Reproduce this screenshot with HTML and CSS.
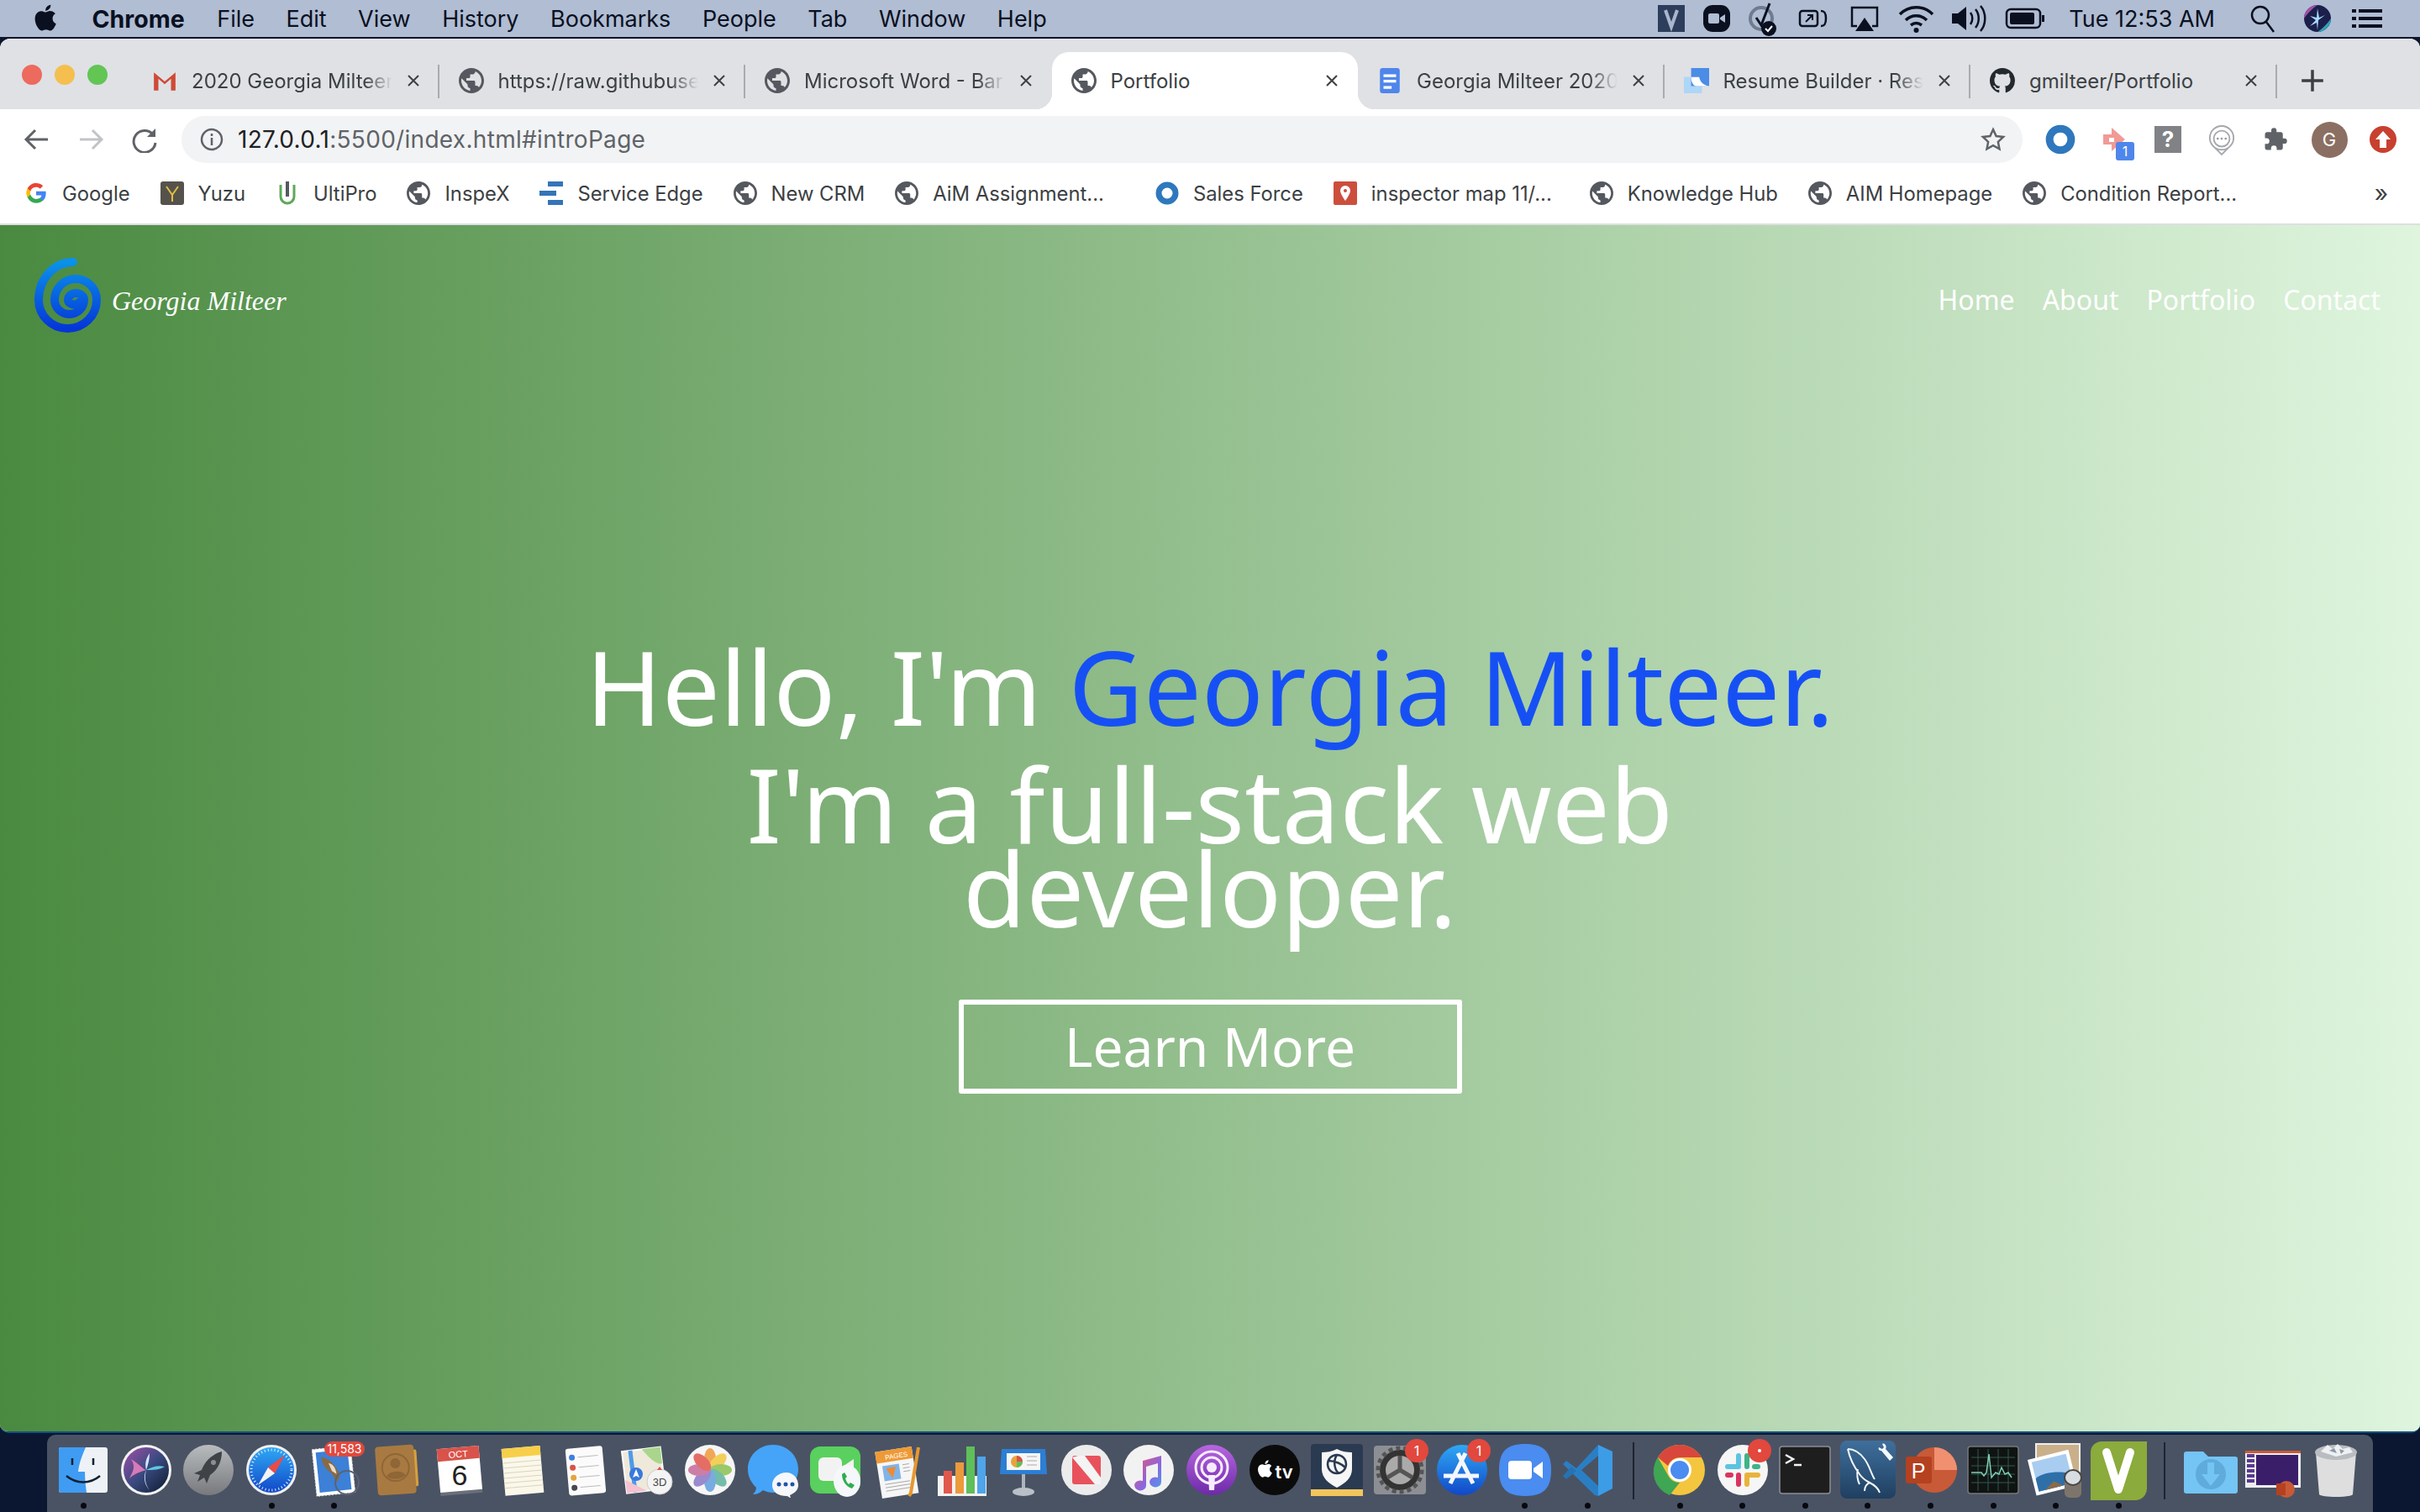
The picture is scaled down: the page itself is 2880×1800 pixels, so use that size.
FILE: index.html
```html
<!DOCTYPE html>
<html lang="en">
  <head>
    <meta charset="UTF-8" />
    <title>Portfolio</title>
    <link rel="stylesheet" href="styles.css">
  </head>
  <body>
    <svg class="svg-defs" aria-hidden="true">
      <defs>
        <linearGradient id="spiral-grad" x1="0" y1="0" x2="0" y2="1"><stop offset="0" stop-color="#0a92ea"/><stop offset="1" stop-color="#0536d8"/></linearGradient>
        <linearGradient id="grey-grad" x1="0" y1="0" x2="0" y2="1"><stop offset="0" stop-color="#b9bcbf"/><stop offset="1" stop-color="#77797c"/></linearGradient>
        <linearGradient id="blue-grad" x1="0" y1="0" x2="0" y2="1"><stop offset="0" stop-color="#2fa8f5"/><stop offset="1" stop-color="#1148c8"/></linearGradient>
        <linearGradient id="siri-grad" x1="0" y1="0" x2="1" y2="1"><stop offset="0" stop-color="#a34fa8"/><stop offset=".5" stop-color="#3a4a80"/><stop offset="1" stop-color="#0c1a2c"/></linearGradient>
        <linearGradient id="purple-grad" x1="0" y1="0" x2="0" y2="1"><stop offset="0" stop-color="#b766e0"/><stop offset="1" stop-color="#6d2aa8"/></linearGradient>
        <linearGradient id="note-grad" x1="0" y1="0" x2="1" y2="1"><stop offset="0" stop-color="#f2546a"/><stop offset=".6" stop-color="#8a66e0"/><stop offset="1" stop-color="#45a0ee"/></linearGradient>
        <linearGradient id="mysql-grad" x1="0" y1="0" x2="0" y2="1"><stop offset="0" stop-color="#3f6f9c"/><stop offset="1" stop-color="#1f3f60"/></linearGradient>
        <symbol id="apple" viewBox="0 0 24 24"><path d="M17.05 12.04c-.03-2.6 2.12-3.85 2.22-3.91-1.21-1.77-3.09-2.01-3.76-2.04-1.6-.16-3.12.94-3.93.94-.81 0-2.06-.92-3.39-.89-1.74.03-3.35 1.01-4.25 2.57-1.81 3.14-.46 7.8 1.3 10.35.86 1.25 1.89 2.65 3.24 2.6 1.3-.05 1.79-.84 3.36-.84 1.57 0 2.01.84 3.39.81 1.4-.02 2.28-1.27 3.14-2.53.99-1.45 1.39-2.85 1.42-2.93-.03-.01-2.72-1.04-2.74-4.13zM14.47 4.4c.72-.87 1.2-2.07 1.07-3.27-1.03.04-2.28.69-3.02 1.55-.66.77-1.24 2-1.09 3.18 1.15.09 2.32-.58 3.04-1.46z"/></symbol>
        <symbol id="globe" viewBox="2 2 20 20"><path fill="#55585e" d="M12 2C6.48 2 2 6.48 2 12s4.48 10 10 10 10-4.48 10-10S17.52 2 12 2zm-1 17.93c-3.95-.49-7-3.85-7-7.93 0-.62.08-1.21.21-1.79L9 15v1c0 1.1.9 2 2 2v1.93zm6.9-2.54c-.26-.81-1-1.39-1.9-1.39h-1v-3c0-.55-.45-1-1-1H8v-2h2c.55 0 1-.45 1-1V7h2c1.1 0 2-.9 2-2v-.41c2.93 1.19 5 4.06 5 7.41 0 2.08-.8 3.97-2.1 5.39z"/></symbol>
        <symbol id="close" viewBox="0 0 16 16"><path d="M2 2l12 12M14 2L2 14" stroke="#3c4043" stroke-width="2" fill="none"/></symbol>
        <symbol id="ring" viewBox="0 0 28 28"><circle cx="14" cy="14" r="10" fill="#fff" stroke="#2f78bd" stroke-width="7"/></symbol>
      </defs>
    </svg>

    <header class="menubar">
      <div class="menu-left">
        <svg class="apple-logo" width="36" height="36"><use href="#apple" fill="#0a1020"/></svg>
        <span class="menu-app">Chrome</span>
        <span>File</span><span>Edit</span><span>View</span><span>History</span><span>Bookmarks</span><span>People</span><span>Tab</span><span>Window</span><span>Help</span>
      </div>
      <div class="menu-right">
        <svg width="54" height="44" viewBox="0 0 54 44"><rect x="11" y="6" width="32" height="32" fill="#2c3e5c"/><path d="M20 12l7 20 7-20" stroke="#a9b6cc" stroke-width="4" fill="none"/></svg>
        <svg width="54" height="44" viewBox="0 0 54 44"><rect x="11" y="6" width="32" height="32" rx="11" fill="#0a1020"/><rect x="17" y="16" width="13" height="12" rx="2" fill="#b0bdd3"/><path d="M31 21l6-4v10l-6-4z" fill="#b0bdd3"/></svg>
        <svg width="57" height="44" viewBox="0 0 57 44"><circle cx="26" cy="22" r="13" fill="none" stroke="#6f7b90" stroke-width="4"/><path d="M20 21l6 9 10-26" stroke="#0a1020" stroke-width="3" fill="none"/><circle cx="35" cy="34" r="9" fill="#0a1020"/><path d="M31 34l3 3 5-6" stroke="#fff" stroke-width="2" fill="none"/></svg>
        <svg width="61" height="44" viewBox="0 0 61 44"><rect x="15" y="13" width="21" height="18" rx="3" fill="none" stroke="#0a1020" stroke-width="2.5"/><path d="M22 26l8-8M24 18h6v6" stroke="#0a1020" stroke-width="2" fill="none"/><path d="M40 13c4 0 6 2 6 9s-2 9-6 9" fill="none" stroke="#0a1020" stroke-width="2.5"/></svg>
        <svg width="62" height="44" viewBox="0 0 62 44"><path d="M22 31h-6V9h30v22h-6" fill="none" stroke="#0a1020" stroke-width="2.5"/><path d="M31 21l11 16H20z" fill="#0a1020"/></svg>
        <svg width="61" height="44" viewBox="0 0 61 44"><g fill="none" stroke="#0a1020" stroke-width="3.5"><path d="M11 17c11-11 28-11 39 0"/><path d="M18 24c7-7 18-7 25 0"/><path d="M24 30c4-3 9-3 13 0"/></g><circle cx="30.500" cy="36" r="3" fill="#0a1020"/></svg>
        <svg width="64" height="44" viewBox="0 0 64 44"><path d="M12 16h7l10-8v28l-10-8h-7z" fill="#0a1020"/><g fill="none" stroke="#0a1020" stroke-width="2.5"><path d="M34 15c3 4 3 10 0 14"/><path d="M40 11c5 6 5 16 0 22"/><path d="M46 7c7 8 7 22 0 30"/></g></svg>
        <svg width="69" height="44" viewBox="0 0 69 44"><rect x="13" y="11" width="40" height="22" rx="5" fill="none" stroke="#0a1020" stroke-width="2.5"/><rect x="17" y="15" width="29" height="14" rx="2" fill="#0a1020"/><rect x="55" y="18" width="3" height="8" fill="#0a1020"/></svg>
        <span class="menu-time">Tue 12:53 AM</span>
        <svg width="65" height="44" viewBox="0 0 65 44"><circle cx="30" cy="18" r="10" fill="none" stroke="#0a1020" stroke-width="2.500"/><path d="M37 26l9 12" stroke="#0a1020" stroke-width="2.500"/></svg>
        <svg width="66" height="44" viewBox="0 0 66 44"><circle cx="33" cy="22" r="16" fill="#1b1f4a"/><path d="M17 22a16 16 0 0116-16c-6 4-12 10-16 16z" fill="#a34fa8"/><path d="M33 38a16 16 0 0016-16c-4 6-10 12-16 16z" fill="#2f9fb8"/><path d="M33 36l1-12 8-6-7 3-2-11-1 11-8-2 7 5-7 7 8-4z" fill="#a8d8ff"/></svg>
        <svg width="50" height="44" viewBox="0 0 50 44"><g fill="#0a1020"><rect x="16" y="11" width="28" height="4"/><rect x="16" y="20" width="28" height="4"/><rect x="16" y="29" width="28" height="4"/><rect x="8" y="11" width="5" height="4"/><rect x="8" y="20" width="5" height="4"/><rect x="8" y="29" width="5" height="4"/></g></svg>
      </div>
    </header>

    <div class="window">
      <div class="tabstrip">
        <div class="lights"><span class="light light-red"></span><span class="light light-yellow"></span><span class="light light-green"></span></div>
        <div class="tab">
          <svg class="tab-icon" viewBox="0 0 28 28"><path d="M2 5l12 10L26 5v20h-5V12l-7 6-7-6v13H2z" fill="#cf4a36"/></svg>
          <span class="tab-title">2020 Georgia Milteer</span>
          <svg class="tab-close"><use href="#close"/></svg>
        </div>
        <div class="tab">
          <svg class="tab-icon"><use href="#globe"/></svg>
          <span class="tab-title">https://raw.githubuse</span>
          <svg class="tab-close"><use href="#close"/></svg>
        </div>
        <div class="tab tab-before-active">
          <svg class="tab-icon"><use href="#globe"/></svg>
          <span class="tab-title">Microsoft Word - Bar</span>
          <svg class="tab-close"><use href="#close"/></svg>
        </div>
        <div class="tab tab-active">
          <svg class="tab-icon"><use href="#globe"/></svg>
          <span class="tab-title">Portfolio</span>
          <svg class="tab-close"><use href="#close"/></svg>
        </div>
        <div class="tab">
          <svg class="tab-icon" viewBox="0 0 28 28"><path d="M6 0h16a3 3 0 013 3v22a3 3 0 01-3 3H6a3 3 0 01-3-3V3a3 3 0 013-3z" fill="#4f86ec"/><path d="M7 7h14v3H7zM7 13h14v3H7zM7 20h9v3H7z" fill="#fff"/></svg>
          <span class="tab-title">Georgia Milteer 2020</span>
          <svg class="tab-close"><use href="#close"/></svg>
        </div>
        <div class="tab">
          <svg class="tab-icon" viewBox="0 0 28 28"><rect x="0" y="10" width="20" height="18" fill="#aed6f6"/><rect x="8" y="0" width="20" height="20" fill="#4a8ce6"/><path d="M8 10h9c1 5 4 9 11 10H14c-4 0-6-5-6-10z" fill="#fff"/></svg>
          <span class="tab-title">Resume Builder · Res</span>
          <svg class="tab-close"><use href="#close"/></svg>
        </div>
        <div class="tab">
          <svg class="tab-icon" viewBox="0 0 16 16"><path fill="#24292e" d="M8 0C3.58 0 0 3.58 0 8c0 3.54 2.29 6.53 5.47 7.59.4.07.55-.17.55-.38 0-.19-.01-.82-.01-1.49-2.01.37-2.53-.49-2.69-.94-.09-.23-.48-.94-.82-1.13-.28-.15-.68-.52-.01-.53.63-.01 1.08.58 1.23.82.72 1.21 1.87.87 2.33.66.07-.52.28-.87.51-1.07-1.78-.2-3.64-.89-3.64-3.95 0-.87.31-1.59.82-2.15-.08-.2-.36-1.02.08-2.12 0 0 .67-.21 2.2.82.64-.18 1.32-.27 2-.27.68 0 1.36.09 2 .27 1.53-1.04 2.2-.82 2.2-.82.44 1.1.16 1.92.08 2.12.51.56.82 1.27.82 2.15 0 3.07-1.87 3.75-3.65 3.95.29.25.54.73.54 1.48 0 1.07-.01 1.93-.01 2.2 0 .21.15.46.55.38A8.013 8.013 0 0016 8c0-4.42-3.58-8-8-8z"/></svg>
          <span class="tab-title tab-title-plain">gmilteer/Portfolio</span>
          <svg class="tab-close"><use href="#close"/></svg>
        </div>
        <svg class="new-tab" viewBox="0 0 24 24"><path d="M12 1v22M1 12h22" stroke="#3c4043" stroke-width="3"/></svg>
      </div>

      <div class="toolbar">
        <svg class="tool-btn" width="64" height="32" viewBox="0 0 64 32"><path d="M45 16H20M30 5L19 16l11 11" stroke="#5f6368" stroke-width="3" fill="none"/></svg>
        <svg class="tool-btn" width="64" height="32" viewBox="0 0 64 32"><path d="M19 16h25M34 5l11 11-11 11" stroke="#c1c3c6" stroke-width="3" fill="none"/></svg>
        <svg class="tool-btn" width="64" height="32" viewBox="0 0 64 32"><path d="M42 10a13 13 0 10 3 10" stroke="#5f6368" stroke-width="3" fill="none"/><path d="M45 3v10H35z" fill="#5f6368"/></svg>
        <div class="address">
          <svg width="28" height="28" viewBox="0 0 28 28"><circle cx="14" cy="14" r="12" fill="none" stroke="#5f6368" stroke-width="2.500"/><path d="M14 12v9M14 7v3" stroke="#5f6368" stroke-width="2.500"/></svg>
          <span class="url"><b class="url-host">127.0.0.1</b>:5500/index.html#introPage</span>
          <svg class="star" width="30" height="30" viewBox="0 0 24 24"><path d="M12 2.500l2.900 6.300 6.800.8-5 4.700 1.300 6.800-6-3.400-6 3.400 1.300-6.800-5-4.700 6.800-.8z" fill="none" stroke="#5f6368" stroke-width="2"/></svg>
        </div>
        <div class="extensions">
          <span class="ext"><svg width="36" height="36"><use href="#ring"/></svg></span>
          <span class="ext">
            <svg width="34" height="34" viewBox="0 0 34 34"><path d="M4 11h10V3l16 14-16 14v-8H4z" fill="#f19a96"/><path d="M11 15h6v5h-6z" fill="#fff"/></svg>
            <span class="ext-badge">1</span>
          </span>
          <span class="ext"><span class="ext-help">?</span></span>
          <span class="ext"><svg width="34" height="44" viewBox="0 0 36 44"><g fill="none" stroke="#a5a8ac" stroke-width="2"><circle cx="18" cy="20" r="15"/><circle cx="18" cy="21" r="10"/><path d="M10 33l8 8 8-8"/></g><g fill="#9a9da1"><circle cx="13" cy="21" r="1.500"/><circle cx="18" cy="21" r="1.500"/><circle cx="23" cy="21" r="1.500"/></g></svg></span>
          <span class="ext"><svg width="30" height="32" viewBox="0 0 24 24"><path fill="#5f6368" d="M20.500 11H19V7c0-1.100-.9-2-2-2h-4V3.500a2.500 2.500 0 00-5 0V5H4c-1.100 0-2 .9-2 2v3.800h1.500a2.700 2.700 0 010 5.400H2V20c0 1.100.9 2 2 2h3.800v-1.500a2.700 2.700 0 015.400 0V22H17c1.100 0 2-.9 2-2v-4h1.500a2.500 2.500 0 000-5z"/></svg></span>
          <span class="ext"><span class="avatar">G</span></span>
          <span class="ext"><svg width="32" height="32" viewBox="0 0 32 32"><circle cx="16" cy="16" r="16" fill="#c8402f"/><path d="M16 6l9 10h-5v10h-8V16H7z" fill="#fff"/></svg></span>
        </div>
      </div>

      <div class="bookmarks">
        <div class="bookmark"><svg viewBox="0 0 24 24"><path d="M22 12.200c0-.7-.1-1.400-.2-2.100H12v4h5.600a4.800 4.800 0 01-2.100 3.100v2.600h3.400c2-1.800 3.100-4.500 3.100-7.600z" fill="#4285f4"/><path d="M12 22c2.800 0 5.100-.9 6.900-2.500l-3.400-2.600c-.9.600-2.100 1-3.500 1-2.700 0-5-1.800-5.800-4.300H3.200v2.700A10 10 0 0012 22z" fill="#34a853"/><path d="M6.200 13.600a6 6 0 010-3.800V7.100H3.200a10 10 0 000 9.200z" fill="#fbbc05"/><path d="M12 5.800c1.500 0 2.900.5 4 1.600l3-3A10 10 0 003.200 7.100l3 2.700C7 7.600 9.300 5.800 12 5.800z" fill="#ea4335"/></svg><span>Google</span></div>
        <div class="bookmark"><svg viewBox="0 0 28 28"><rect x="0" y="0" width="28" height="28" rx="3" fill="#55524c"/><path d="M7 6l7 10 7-10M14 16v8" stroke="#e2bd3f" stroke-width="2" fill="none"/></svg><span>Yuzu</span></div>
        <div class="bookmark"><svg viewBox="0 0 28 28"><path d="M6 4v14a8 8 0 0016 0V4" fill="none" stroke="#5fa85a" stroke-width="3"/><rect x="12" y="0" width="4" height="18" fill="#55585e"/></svg><span>UltiPro</span></div>
        <div class="bookmark"><svg><use href="#globe"/></svg><span>InspeX</span></div>
        <div class="bookmark"><svg viewBox="0 0 28 28"><path d="M10 0h18v6H10zM0 11h20v6H0zM10 22h18v6H10z" fill="#3474b8"/></svg><span>Service Edge</span></div>
        <div class="bookmark"><svg><use href="#globe"/></svg><span>New CRM</span></div>
        <div class="bookmark bookmark-wide"><svg><use href="#globe"/></svg><span>AiM Assignment...</span></div>
        <div class="bookmark"><svg><use href="#ring"/></svg><span>Sales Force</span></div>
        <div class="bookmark bookmark-mid"><svg viewBox="0 0 28 28"><rect x="0" y="0" width="28" height="28" rx="2" fill="#cc4e3d"/><path d="M14 5a6 6 0 00-6 6c0 4 6 12 6 12s6-8 6-12a6 6 0 00-6-6z" fill="#fff"/><circle cx="14" cy="11" r="2" fill="#cc4e3d"/></svg><span>inspector map 11/...</span></div>
        <div class="bookmark"><svg><use href="#globe"/></svg><span>Knowledge Hub</span></div>
        <div class="bookmark"><svg><use href="#globe"/></svg><span>AIM Homepage</span></div>
        <div class="bookmark"><svg><use href="#globe"/></svg><span>Condition Report...</span></div>
        <span class="more">»</span>
      </div>

      <main class="page">
        <nav class="site-nav">
          <a class="brand" href="#introPage">
            <svg class="brand-spiral" width="82" height="92" viewBox="0 0 82 92"><path d="M46 5A41 45 0 005 50A34.500 34 0 0074 50A25 25 0 0024 50A17.500 17 0 0059 50A9.500 8 0 0040 50C40 56 50 57 53 53" fill="none" stroke="url(#spiral-grad)" stroke-width="10" stroke-linecap="round"/></svg>
            <span class="brand-name">Georgia Milteer</span>
          </a>
          <div class="site-links">
            <a href="#introPage">Home</a>
            <a href="#about">About</a>
            <a href="#portfolio">Portfolio</a>
            <a href="#contact">Contact</a>
          </div>
        </nav>
        <section class="hero">
          <h1 class="hero-title">Hello, I'm <span class="hero-name">Georgia Milteer.</span></h1>
          <h2 class="hero-sub">I'm a full-stack web developer.</h2>
          <a class="hero-btn" href="#about">Learn More</a>
        </section>
      </main>
    </div>

    <footer class="dock">
      <!-- finder -->
      <div class="dock-item is-open"><svg viewBox="0 0 64 64"><rect x="3" y="4" width="58" height="54" rx="3" fill="#eef2f7"/><path d="M6 4h29c-5 11-8 20-9 29h8c0 9 1 17 2 25H6a3 3 0 01-3-3V7a3 3 0 013-3z" fill="#3f9cf2"/><path d="M19 17v8M44 17v8" stroke="#123" stroke-width="2.500"/><path d="M12 38c12 10 28 10 40 0" fill="none" stroke="#123" stroke-width="2.500"/></svg></div>
      <!-- siri -->
      <div class="dock-item"><svg viewBox="0 0 64 64"><circle cx="32" cy="31" r="30" fill="#f2f2f2"/><circle cx="32" cy="31" r="27" fill="url(#siri-grad)"/><path d="M14 18c10 6 14 12 18 13-6 2-14 4-20 10 4-8 8-14 2-23z" fill="#d87ab8"/><path d="M32 31c8-4 14-6 22-4-6 4-14 4-22 4z" fill="#5fc8e0"/><path d="M32 31c-2 8-2 16 4 24-6-6-8-16-4-24zM32 31c-2-8 0-14 4-20 0 8-2 14-4 20z" fill="#d0e8ff"/></svg></div>
      <!-- launchpad -->
      <div class="dock-item"><svg viewBox="0 0 64 64"><circle cx="32" cy="31" r="30" fill="url(#grey-grad)"/><path d="M48 9c-11 3-20 11-24 22l-9 4 7 2-3 8 8-5 3 7 4-10c9-6 14-16 14-28z" fill="#3f4347"/><circle cx="38" cy="22" r="3" fill="#8b8e92"/></svg></div>
      <!-- safari -->
      <div class="dock-item is-open"><svg viewBox="0 0 64 64"><circle cx="32" cy="31" r="30" fill="#f0f0f0"/><circle cx="32" cy="31" r="27" fill="url(#blue-grad)"/><circle cx="32" cy="31" r="24" fill="none" stroke="#e6f2ff" stroke-width="3" stroke-dasharray="1 3"/><path d="M48 13L28 28l8 7z" fill="#ee4a44"/><path d="M16 49l20-14-8-7z" fill="#f4f4f4"/></svg></div>
      <!-- mail -->
      <div class="dock-item is-open"><svg viewBox="0 0 64 64"><g transform="rotate(-6 32 32)"><rect x="8" y="4" width="46" height="56" fill="#fff" stroke="#ddd" stroke-dasharray="2 2"/><rect x="12" y="8" width="38" height="48" fill="#3c80d8"/><path d="M18 14c8 2 16 10 20 24l-4 8-6-12c-6-4-10-12-10-20z" fill="#8a6a44"/><path d="M26 22c6 2 8 8 8 14l-5-4z" fill="#e8dcc8"/></g><circle cx="47" cy="46" r="14" fill="none" stroke="#5a6376" stroke-width="2"/><rect class="badge-bg" x="20" y="-3" width="48" height="18" rx="9" fill="#e2483d"/><text class="badge-text" x="44" y="11" font-size="14">11,583</text></svg></div>
      <!-- contacts -->
      <div class="dock-item"><svg viewBox="0 0 64 64"><g transform="rotate(-4 32 32)"><rect x="50" y="8" width="7" height="44" rx="2" fill="#d8a03c"/><rect x="8" y="2" width="46" height="58" rx="4" fill="#a87a42"/><circle cx="31" cy="28" r="16" fill="none" stroke="#8f6636" stroke-width="2"/><circle cx="31" cy="23" r="6" fill="#8f6636"/><path d="M20 38c2-7 20-7 22 0-6 5-16 5-22 0z" fill="#8f6636"/></g></svg></div>
      <!-- calendar -->
      <div class="dock-item"><svg viewBox="0 0 64 64"><g transform="rotate(-5 32 32)"><rect x="7" y="6" width="50" height="54" fill="#6a6f78"/><rect x="7" y="4" width="50" height="52" fill="#fff"/><rect x="7" y="4" width="50" height="15" fill="#d9534a"/><text class="cal-month" x="32" y="16" font-size="11">OCT</text></g><text class="cal-day" x="32" y="49" font-size="34">6</text></svg></div>
      <!-- notes -->
      <div class="dock-item"><svg viewBox="0 0 64 64"><g transform="rotate(-5 32 32)"><rect x="10" y="4" width="46" height="56" fill="#fbf8ea"/><rect x="10" y="4" width="46" height="11" fill="#f7cf4a"/><path d="M10 21h46M10 27h46M10 33h46M10 39h46M10 45h46M10 51h46" stroke="#d8d4c2"/></g></svg></div>
      <!-- reminders -->
      <div class="dock-item"><svg viewBox="0 0 64 64"><g transform="rotate(-5 32 32)"><rect x="11" y="4" width="44" height="56" rx="3" fill="#fbfbfb"/><circle cx="18" cy="15" r="3.500" fill="#3d7fe0"/><circle cx="18" cy="27" r="3.500" fill="#d9534a"/><circle cx="18" cy="39" r="3.500" fill="#e8a33c"/><circle cx="18" cy="51" r="3.500" fill="#45484f"/><path d="M25 15h24M25 27h24M25 39h24M25 51h24" stroke="#bbb"/></g></svg></div>
      <!-- maps -->
      <div class="dock-item"><svg viewBox="0 0 64 64"><g transform="rotate(-7 28 32)"><rect x="4" y="6" width="46" height="50" fill="#eee9da" stroke="#fff" stroke-width="2"/><path d="M28 6h22v20c-8 0-14-8-22-20z" fill="#a9d68c"/><path d="M14 6v50" stroke="#4f9ae8" stroke-width="5"/><path d="M4 40l24 16H4z" fill="#f4c2d0"/></g><circle cx="18" cy="36" r="8" fill="#3a78dc"/><path d="M18 30l4 10-4-2-4 2z" fill="#fff"/><circle cx="46" cy="45" r="15" fill="#f4f4f4" stroke="#ccc"/><text class="map-3d" x="46" y="50" font-size="13">3D</text><path d="M46 27l3 4h-6z" fill="#d9534a"/></svg></div>
      <!-- photos -->
      <div class="dock-item"><svg viewBox="0 0 64 64"><circle cx="32" cy="31" r="30" fill="#f6f6f6"/><g transform="translate(32 31)" opacity=".85"><ellipse cy="-13" rx="7" ry="13" fill="#ef9a3e"/><ellipse cy="-13" rx="7" ry="13" fill="#f3c93f" transform="rotate(45)"/><ellipse cy="-13" rx="7" ry="13" fill="#8cc152" transform="rotate(90)"/><ellipse cy="-13" rx="7" ry="13" fill="#5fb39c" transform="rotate(135)"/><ellipse cy="-13" rx="7" ry="13" fill="#62a0de" transform="rotate(180)"/><ellipse cy="-13" rx="7" ry="13" fill="#8a78c8" transform="rotate(225)"/><ellipse cy="-13" rx="7" ry="13" fill="#c76a9a" transform="rotate(270)"/><ellipse cy="-13" rx="7" ry="13" fill="#e2574c" transform="rotate(315)"/></g></svg></div>
      <!-- messages -->
      <div class="dock-item"><svg viewBox="0 0 64 64"><path d="M32 1C15 1 2 14 2 30c0 9 4 16 10 22 0 3-2 6-4 8 5 0 9-2 12-5 4 2 8 3 12 3 17 0 30-12 30-28S49 1 32 1z" fill="#45a4f7"/><path d="M48 34c-10 0-17 7-17 15s7 13 17 13c2 0 3 2 5 2l-1-3c7-3 10-7 10-12 0-8-6-15-14-15z" fill="#f5f7fa"/><g fill="#1c55a8"><circle cx="39" cy="48" r="2.500"/><circle cx="47" cy="48" r="2.500"/><circle cx="55" cy="48" r="2.500"/></g></svg></div>
      <!-- facetime -->
      <div class="dock-item"><svg viewBox="0 0 64 64"><rect x="2" y="3" width="60" height="56" rx="12" fill="#5ad05e"/><rect x="12" y="16" width="28" height="28" rx="6" fill="#f2f2f2"/><path d="M42 26l12-8v24l-12-8z" fill="#f2f2f2"/><ellipse cx="46" cy="44" rx="16" ry="19" fill="#f5f7fa"/><path d="M40 36c0 8 5 15 12 17l3-4-5-3-2 2c-2-2-3-4-4-7l2-2-3-5z" fill="#2fae4f"/></svg></div>
      <!-- pages -->
      <div class="dock-item"><svg viewBox="0 0 64 64"><g transform="rotate(-9 30 32)"><rect x="8" y="6" width="44" height="56" fill="#f6f6f6"/><rect x="8" y="6" width="44" height="14" fill="#ee9a35"/><text class="pages-label" x="19" y="17" font-size="8">PAGES</text><rect x="14" y="24" width="20" height="18" fill="#7fb4e8"/><path d="M18 27h12l-6 13z" fill="#ee8a35"/><path d="M14 46h30M14 50h30M14 54h30M38 26h8M38 30h8M38 34h8" stroke="#aaa"/></g><path d="M56 4l-9 54-2 4" stroke="#e8982e" stroke-width="4" fill="none"/></svg></div>
      <!-- numbers -->
      <div class="dock-item"><svg viewBox="0 0 64 64"><path d="M4 38h58v24H4z" fill="#f2f2f2"/><rect x="11" y="32" width="10" height="27" fill="#e2574c"/><rect x="25" y="22" width="10" height="37" fill="#ec9a3c"/><rect x="38" y="3" width="10" height="56" fill="#5fbf5a"/><rect x="51" y="15" width="10" height="44" fill="#4fa4ea"/></svg></div>
      <!-- keynote -->
      <div class="dock-item"><svg viewBox="0 0 64 64"><path d="M32 36v20" stroke="#aeb4bc" stroke-width="4"/><ellipse cx="32" cy="57" rx="13" ry="5" fill="#b9c0c8"/><path d="M6 6h52l2 30H4z" fill="#2c7fd4"/><rect x="12" y="11" width="40" height="20" fill="#f6f6f6"/><circle cx="24" cy="21" r="7" fill="#e8a33c"/><path d="M24 21V14a7 7 0 017 7z" fill="#d9534a"/><path d="M24 21h7a7 7 0 01-7 7z" fill="#5fbf5a"/><path d="M36 15h12M36 20h12M36 25h12" stroke="#aaa"/></svg></div>
      <!-- news -->
      <div class="dock-item"><svg viewBox="0 0 64 64"><circle cx="32" cy="31" r="30" fill="#ececec"/><rect x="15" y="14" width="34" height="34" rx="3" fill="#e8525c"/><path d="M22 14h8l19 26v8h-7L15 16z" fill="#f4f4f4"/></svg></div>
      <!-- music -->
      <div class="dock-item"><svg viewBox="0 0 64 64"><circle cx="32" cy="31" r="30" fill="#f2f2f2"/><path d="M25 20l22-6v31a7 6 0 11-4-5V23l-14 4v22a7 6 0 11-4-5z" fill="url(#note-grad)"/></svg></div>
      <!-- podcasts -->
      <div class="dock-item"><svg viewBox="0 0 64 64"><circle cx="32" cy="31" r="30" fill="url(#purple-grad)"/><g fill="none" stroke="#f6ecff" stroke-width="3"><circle cx="32" cy="28" r="19"/><circle cx="32" cy="28" r="12"/></g><circle cx="32" cy="28" r="6" fill="#f6ecff"/><path d="M28 37h8l-1 18h-6z" fill="#f6ecff"/></svg></div>
      <!-- tv -->
      <div class="dock-item"><svg viewBox="0 0 64 64"><circle cx="32" cy="31" r="30" fill="#0b0b0b"/><use href="#apple" x="9" y="18" width="24" height="24" fill="#fff"/><text class="tv-label" x="43" y="41" font-size="22">tv</text></svg></div>
      <!-- vpn shield -->
      <div class="dock-item"><svg viewBox="0 0 64 64"><rect x="1" y="0" width="62" height="62" rx="4" fill="#2a3a50"/><rect x="1" y="54" width="62" height="8" fill="#f2c65c"/><path d="M32 6c6 3 12 4 18 4v20c0 10-8 17-18 22-10-5-18-12-18-22V10c6 0 12-1 18-4z" fill="#f6f6f6"/><g fill="none" stroke="#2a3a50" stroke-width="2.500"><circle cx="32" cy="24" r="11"/><path d="M22 20c8 0 16 4 20 8M32 13c-4 6-4 16 2 22"/></g></svg></div>
      <!-- system preferences -->
      <div class="dock-item"><svg viewBox="0 0 64 64"><rect x="1" y="2" width="62" height="58" rx="4" fill="#8c8f93"/><circle cx="32" cy="31" r="24" fill="#333"/><circle cx="32" cy="31" r="26" fill="none" stroke="#555" stroke-width="5" stroke-dasharray="5 4"/><circle cx="32" cy="31" r="17" fill="#aaa"/><path d="M32 31V14M32 31L17 40M32 31l15 9" stroke="#555" stroke-width="5"/><circle cx="52" cy="8" r="14" fill="#e2483d"/><text class="badge-text" x="52" y="14" font-size="16">1</text></svg></div>
      <!-- app store -->
      <div class="dock-item"><svg viewBox="0 0 64 64"><circle cx="32" cy="31" r="30" fill="url(#blue-grad)"/><path d="M36 11L18 47M27 11l18 36M10 38h42" stroke="#f4f7fb" stroke-width="5" fill="none"/><circle cx="52" cy="8" r="14" fill="#e2483d"/><text class="badge-text" x="52" y="14" font-size="16">1</text></svg></div>
      <!-- zoom -->
      <div class="dock-item is-open"><svg viewBox="0 0 64 64"><path d="M32 0c22 0 31 9 31 31s-9 31-31 31S1 53 1 31 10 0 32 0z" fill="#4a8cf0"/><rect x="12" y="20" width="28" height="22" rx="4" fill="#fff"/><path d="M42 29l11-8v20l-11-8z" fill="#fff"/></svg></div>
      <!-- vscode -->
      <div class="dock-item is-open"><svg viewBox="0 0 64 64"><path d="M44 1l17 8v44l-17 9z" fill="#3d9ce6"/><path d="M44 1L18 29 6 20l-4 4 38 37 4 1 0-12L24 31 44 14z" fill="#2a7fc4"/><path d="M2 38l4 4 12-10-6-5z" fill="#2673b3"/></svg></div>
      <div class="dock-sep"></div>
      <!-- chrome -->
      <div class="dock-item is-open"><svg viewBox="0 0 64 64"><circle cx="32" cy="31" r="30" fill="#f4c63f"/><path d="M32 1a30 30 0 0126 15H32a15 15 0 00-14 10L6 16A30 30 0 0132 1z" fill="#d9473c"/><path d="M6 16l13 23a15 15 0 0013 7l-12 15A30 30 0 016 16z" fill="#3fa653"/><circle cx="32" cy="31" r="14" fill="#fff"/><circle cx="32" cy="31" r="11" fill="#4a8cf0"/></svg></div>
      <!-- slack -->
      <div class="dock-item is-open"><svg viewBox="0 0 64 64"><circle cx="32" cy="31" r="30" fill="#f6f6f6"/><g stroke-width="6" stroke-linecap="round"><path d="M27 14v10M14 27h13" stroke="#5cc4e0"/><path d="M37 14v13M50 27h-4" stroke="#3eb489"/><path d="M37 48v-10M50 37H37" stroke="#e8b33c"/><path d="M27 48V37M14 37h4" stroke="#d8345f"/></g><circle cx="52" cy="8" r="14" fill="#e2483d"/><circle cx="52" cy="8" r="2" fill="#fff"/></svg></div>
      <!-- terminal -->
      <div class="dock-item is-open"><svg viewBox="0 0 64 64"><rect x="2" y="3" width="60" height="56" rx="3" fill="#1e1e1e" stroke="#8a8e94" stroke-width="1.500"/><path d="M9 13l9 5-9 5M19 25h9" stroke="#f2f2f2" stroke-width="2.500" fill="none"/></svg></div>
      <!-- mysql workbench -->
      <div class="dock-item is-open"><svg viewBox="0 0 64 64"><rect x="-1" y="-4" width="66" height="69" rx="8" fill="url(#mysql-grad)"/><path d="M8 6c3 14 8 22 14 30 4 6 8 8 12 10 6 3 10 6 12 12M20 30c-2 6 0 14 2 18M34 46c-4 2-6 6-6 10" fill="none" stroke="#f4f8fb" stroke-width="2"/><path d="M8 6c8 0 14 4 20 12 6 8 8 18 12 24" fill="none" stroke="#f4f8fb" stroke-width="2"/><path d="M48 8l10 12 4-4-9-10c2-3-1-8-4-6l2 4-2 2-4-2c-1 2 0 4 3 4z" fill="#f4f8fb"/></svg></div>
      <!-- powerpoint -->
      <div class="dock-item is-open"><svg viewBox="0 0 64 64"><circle cx="36" cy="31" r="27" fill="#c85a38"/><path d="M36 4a27 27 0 0127 27H36z" fill="#f09070"/><rect x="2" y="15" width="31" height="32" rx="3" fill="#b4411f"/><text class="ppt-label" x="17" y="41" font-size="25">P</text></svg></div>
      <!-- activity monitor -->
      <div class="dock-item is-open"><svg viewBox="0 0 64 64"><rect x="2" y="3" width="60" height="56" rx="3" fill="#0f1412" stroke="#777" stroke-width="1.500"/><path d="M6 16h52M6 26h52M6 36h52M6 46h52M14 6v50M26 6v50M38 6v50M50 6v50" stroke="#37574e"/><path d="M6 34h12l3 4 3-4 3-22 3 28 5-6 4 2 3-8 4 8 4-2 4 6" fill="none" stroke="#7fd0b4" stroke-width="1.500"/></svg></div>
      <!-- preview -->
      <div class="dock-item is-open"><svg viewBox="0 0 64 64"><rect x="8" y="0" width="52" height="46" fill="#c9b08a" stroke="#eee" stroke-width="2"/><g transform="rotate(-14 28 32)"><rect x="2" y="12" width="50" height="44" fill="#fff"/><rect x="6" y="16" width="42" height="36" fill="#a9cdf0"/><path d="M6 36c10-6 30-2 42 4v12H6z" fill="#2f6fa8"/><path d="M14 52l12-8 10 8z" fill="#8a6a4a"/></g><rect x="42" y="38" width="20" height="26" rx="6" fill="#7d756c"/><ellipse cx="52" cy="40" rx="10" ry="9" fill="#d8dde2" stroke="#4a4642" stroke-width="2"/></svg></div>
      <!-- vim -->
      <div class="dock-item is-open"><svg viewBox="0 0 64 64"><path d="M12-3h54v56a14 14 0 01-14 14H-1V10A13 13 0 0112-3z" fill="#8bab3c"/><path d="M18 10l14 44 14-44" stroke="#fff" stroke-width="10" fill="none" stroke-linecap="round" stroke-linejoin="round"/></svg></div>
      <div class="dock-sep"></div>
      <!-- downloads -->
      <div class="dock-item"><svg viewBox="0 0 64 64"><path d="M0 12a3 3 0 013-3h20l6 6h32a3 3 0 013 3v38a3 3 0 01-3 3H3a3 3 0 01-3-3z" fill="#74c4f4"/><circle cx="32" cy="36" r="18" fill="#5fabdc"/><path d="M28 22h8v14h7L32 50 21 36h7z" fill="#74c4f4"/></svg></div>
      <!-- recent doc -->
      <div class="dock-item"><svg viewBox="0 0 64 64"><rect x="-1" y="8" width="66" height="44" fill="#eee"/><rect x="-1" y="8" width="66" height="3" fill="#c85a38"/><rect x="12" y="13" width="50" height="36" fill="#3a1e6a"/><path d="M1 14h9M1 20h9M1 26h9M1 32h9M1 38h9M1 44h9" stroke="#5a3a90" stroke-width="4"/><circle cx="48" cy="54" r="10" fill="#c85a38"/><rect x="36" y="47" width="11" height="14" fill="#b4411f"/></svg></div>
      <!-- trash -->
      <div class="dock-item"><svg viewBox="0 0 64 64"><path d="M8 10c4 4 44 4 48 0l-4 50c-2 4-38 4-40 0z" fill="#dedede"/><ellipse cx="32" cy="10" rx="25" ry="9" fill="#b9bcc0"/><path d="M14 9l8-8 6 5 6-6 6 6 8-2 4 6-20 5z" fill="#eef0f2"/><path d="M24 8l6-3 3 6zM36 6l6 2-4 4z" fill="#8a9aa8"/></svg></div>
    </footer>
  </body>
</html>
```

FILE: styles.css
```css
* {
  box-sizing: border-box;
}

html,
body {
  height: 100%;
}

body {
  margin: 0;
  width: 2880px;
  height: 1800px;
  overflow: hidden;
  display: flex;
  flex-direction: column;
  background: #0b1730;
  font-family: Inter, "Liberation Sans", sans-serif;
  color: #0a1020;
}

a {
  color: inherit;
  text-decoration: none;
}

.svg-defs {
  position: absolute;
  width: 0;
  height: 0;
}

/* mac menu bar */
.menubar {
  height: 46px;
  flex: none;
  display: flex;
  justify-content: space-between;
  align-items: center;
  padding: 0 39px 0 37px;
  background: #b0bdd3;
  border-bottom: 2px solid #0d1528;
  font-size: 27px;
}

.menu-left {
  display: flex;
  align-items: center;
  gap: 37.500px;
}

.apple-logo {
  margin-right: -1px;
}

.menu-app {
  font-size: 28.500px;
  font-weight: 700;
  margin-right: 1px;
}

.menu-right {
  display: flex;
  align-items: center;
}

.menu-time {
  margin: 0 24px 0 18px;
  white-space: nowrap;
}

/* browser window */
.window {
  flex: 1;
  min-height: 0;
  display: flex;
  flex-direction: column;
  margin-bottom: 2px;
  border-radius: 12px 12px 10px 10px;
  overflow: hidden;
  background: #fff;
  border-bottom: 2px solid #14507e;
}

.tabstrip {
  height: 84px;
  flex: none;
  display: flex;
  align-items: flex-end;
  background: #dfe1e5;
  font-size: 24px;
  color: #3c4043;
}

.lights {
  width: 158px;
  height: 68px;
  display: flex;
  gap: 15px;
  padding: 15px 0 0 26px;
}

.light {
  width: 24px;
  height: 24px;
  border-radius: 50%;
}

.light-red {
  background: #ed6a5e;
}

.light-yellow {
  background: #f5bf4f;
}

.light-green {
  background: #62c554;
}

.tab {
  position: relative;
  width: 364.500px;
  height: 68px;
  display: flex;
  align-items: center;
  gap: 17px;
  padding: 0 23px 0 23px;
}

.tab::after {
  content: "";
  position: absolute;
  right: 0;
  top: 15px;
  height: 40px;
  width: 2px;
  background: #a9abaf;
}

.tab-before-active::after {
  display: none;
}

.tab-active {
  background: #fff;
  border-radius: 20px 20px 0 0;
}

.tab-active::before {
  content: "";
  position: absolute;
  left: -20px;
  bottom: 0;
  width: 20px;
  height: 20px;
  background: radial-gradient(circle at 0 0, transparent 20px, #fff 20.500px);
}

.tab-active::after {
  top: auto;
  bottom: 0;
  right: -20px;
  width: 20px;
  height: 20px;
  background: radial-gradient(circle at 100% 0, transparent 20px, #fff 20.500px);
}

.tab-icon {
  flex: none;
  width: 30px;
  height: 30px;
}

.tab-title {
  flex: 1;
  min-width: 0;
  white-space: nowrap;
  -webkit-mask-image: linear-gradient(to right, #000 86%, transparent 100%);
  mask-image: linear-gradient(to right, #000 86%, transparent 100%);
}

.tab-active .tab-title,
.tab-title-plain {
  -webkit-mask-image: none;
  mask-image: none;
}

.tab-close {
  flex: none;
  width: 16px;
  height: 16px;
}

.new-tab {
  width: 28px;
  height: 28px;
  margin: 0 0 20px 28px;
}

.toolbar {
  height: 66px;
  flex: none;
  display: flex;
  align-items: center;
  padding: 8px 12px 2px;
  background: #fff;
}

.address {
  flex: 1;
  height: 56px;
  display: flex;
  align-items: center;
  gap: 17px;
  margin: 0 13px 0 12px;
  padding: 0 20px 0 22px;
  border-radius: 28px;
  background: #f1f3f4;
  font-size: 28px;
  letter-spacing: 0.3px;
  color: #5f6368;
}

.url {
  flex: 1;
}

.url-host {
  font-weight: 400;
  color: #202124;
}

.extensions {
  display: flex;
  align-items: center;
}

.ext {
  position: relative;
  width: 64px;
  display: flex;
  justify-content: center;
  align-items: center;
}

.ext-badge {
  position: absolute;
  right: 8px;
  bottom: -8px;
  width: 22px;
  height: 22px;
  border-radius: 3px;
  background: #4f86ec;
  color: #fff;
  font-size: 16px;
  line-height: 22px;
  text-align: center;
}

.ext-help {
  width: 32px;
  height: 32px;
  background: #808285;
  color: #fff;
  font-size: 26px;
  font-weight: 700;
  line-height: 32px;
  text-align: center;
}

.avatar {
  width: 43px;
  height: 43px;
  border-radius: 50%;
  background: #8b6f62;
  color: #fff;
  font-size: 22px;
  line-height: 43px;
  text-align: center;
}

.bookmarks {
  height: 72px;
  flex: none;
  display: flex;
  align-items: center;
  padding: 0 0 2px 29px;
  background: #fff;
  border-bottom: 2px solid #dedfe2;
  font-size: 23.800px;
  color: #3c4043;
}

.bookmark {
  display: flex;
  align-items: center;
  gap: 17px;
  margin-right: 36px;
  white-space: nowrap;
}

.bookmark svg {
  flex: none;
  width: 28px;
  height: 28px;
}

.bookmark-wide {
  margin-right: 61px;
}

.bookmark-mid {
  margin-right: 45px;
}

.more {
  margin-left: auto;
  margin-right: 38px;
  font-size: 28px;
}

/* the portfolio page inside the browser */
.page {
  flex: 1;
  min-height: 0;
  display: flex;
  flex-direction: column;
  background: linear-gradient(to right, #4a8a40, #dff5de);
  font-family: "Noto Sans", "Open Sans", sans-serif;
  color: #fff;
}

.site-nav {
  display: flex;
  justify-content: space-between;
  align-items: center;
  padding: 39px 47px 0 41px;
}

.brand {
  display: flex;
  align-items: center;
  gap: 10px;
}

.brand-name {
  font-family: "Liberation Serif", serif;
  font-style: italic;
  font-size: 32px;
  padding-top: 10px;
}

.site-links {
  display: flex;
  gap: 33px;
  padding-top: 7px;
  font-size: 32px;
}

.hero {
  flex: 1;
  display: flex;
  flex-direction: column;
  justify-content: center;
  align-items: center;
  padding-bottom: 55px;
  text-align: center;
}

.hero-title {
  margin: 0 0 20px;
  font-size: 122px;
  font-weight: 400;
  letter-spacing: 0.3px;
  line-height: 140px;
}

.hero-name {
  color: #1650f5;
}

.hero-sub {
  margin: 0 0 83px;
  max-width: 1300px;
  font-size: 122px;
  font-weight: 400;
  letter-spacing: 0.3px;
  line-height: 100px;
}

.hero-btn {
  width: 599px;
  height: 112px;
  display: flex;
  justify-content: center;
  align-items: center;
  border: 6px solid #fff;
  border-radius: 3px;
  font-size: 64px;
  line-height: 100px;
}

/* dock */
.dock {
  height: 92px;
  flex: none;
  display: flex;
  margin: 0 56px;
  padding: 11px 6px 0;
  background: #4a5364;
  border-radius: 10px 10px 0 0;
}

.dock-item {
  position: relative;
  width: 74.600px;
  flex: none;
  display: flex;
  justify-content: center;
}

.dock-item svg {
  width: 64px;
  height: 64px;
  overflow: visible;
}

.dock-item.is-open::after {
  content: "";
  position: absolute;
  left: 50%;
  top: 70px;
  width: 7px;
  height: 7px;
  margin-left: -3.500px;
  border-radius: 50%;
  background: #07090f;
}

.dock-sep {
  width: 35px;
  flex: none;
  height: 68px;
  margin-top: -2px;
  background: linear-gradient(#1d2430, #1d2430) center / 2px 100% no-repeat;
}

.badge-text {
  fill: #fff;
  text-anchor: middle;
  font-family: Inter, sans-serif;
}

.cal-month {
  fill: #fff;
  text-anchor: middle;
  font-family: "Liberation Sans", sans-serif;
}

.cal-day {
  fill: #222;
  text-anchor: middle;
  font-family: "Liberation Sans", sans-serif;
}

.map-3d {
  fill: #444;
  text-anchor: middle;
  font-family: "Liberation Sans", sans-serif;
}

.pages-label {
  fill: #fff;
  font-family: "Liberation Sans", sans-serif;
}

.tv-label {
  fill: #fff;
  text-anchor: middle;
  font-weight: 600;
  font-family: Inter, sans-serif;
}

.ppt-label {
  fill: #fff;
  text-anchor: middle;
  font-family: "Liberation Sans", sans-serif;
}
```
